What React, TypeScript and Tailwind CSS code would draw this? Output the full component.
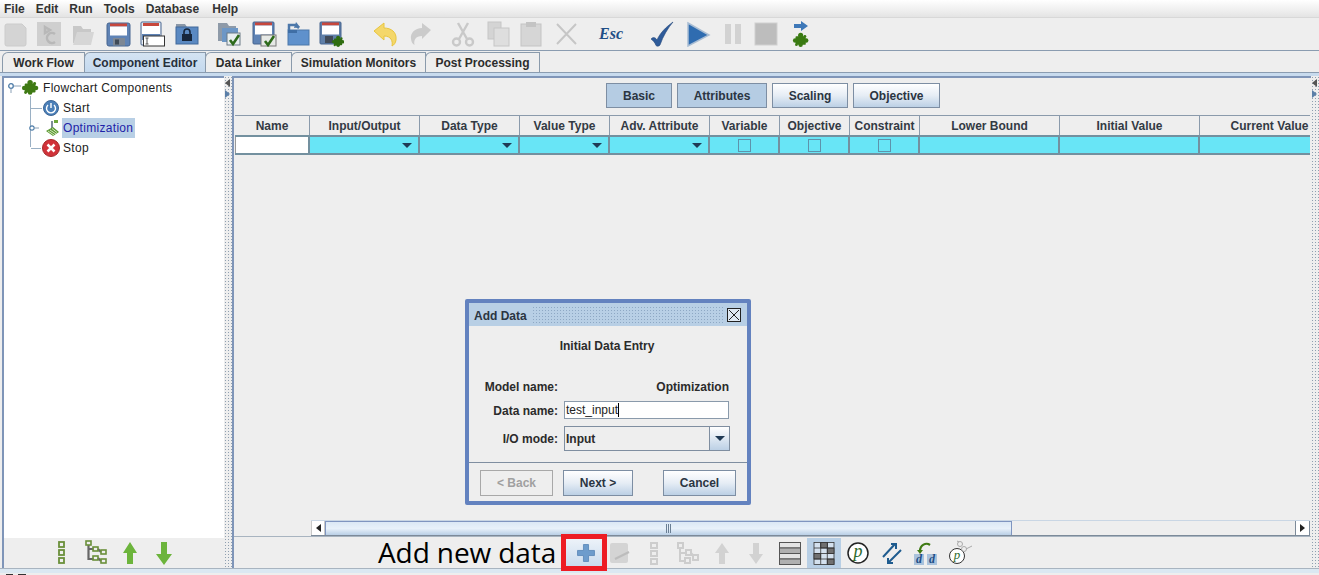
import React from "react";

const F = "font-['Liberation_Sans',Arial,sans-serif]";

function Puzzle({ x = 0, y = 0, s = 1, c = "#3f7a14" }: { x?: number; y?: number; s?: number; c?: string }) {
  return (
    <g transform={`translate(${x} ${y}) scale(${s})`} fill={c}>
      <rect x="3" y="5" width="12" height="10" rx="1" />
      <circle cx="9" cy="4" r="3" />
      <circle cx="2.5" cy="10" r="2.6" />
      <circle cx="15.5" cy="10" r="2.6" />
      <circle cx="9" cy="15" r="2.6" />
      <circle cx="14" cy="5" r="1.6" />
      <circle cx="4" cy="15" r="1.6" />
    </g>
  );
}

function Floppy() {
  return (
    <g>
      <rect x="2" y="2" width="23" height="23" rx="2" fill="#5f83b5" stroke="#46648f" />
      <rect x="5" y="2.5" width="17" height="3" fill="#c7473c" />
      <rect x="5" y="5.5" width="17" height="9" fill="#fdfdfd" />
      <rect x="8" y="17" width="12" height="7.5" fill="#7d8794" />
      <rect x="10" y="18.5" width="4" height="5" fill="#3f4a58" />
    </g>
  );
}

function Check({ x = 0, y = 0 }: { x?: number; y?: number }) {
  return <path transform={`translate(${x} ${y})`} d="M1 6l3 4 6-9" fill="none" stroke="#2d6a1b" strokeWidth="2.6" />;
}

const icons: Record<string, React.ReactNode> = {
  gdoc: <path d="M3 5q0-2 2-2h15l4 4v16q0 2-2 2H5q-2 0-2-2z" fill="#d4d4d4" stroke="#cccccc" />,
  gs: (
    <g>
      <rect x="1" y="1" width="24" height="24" fill="#cfcfcf" />
      <path d="M9 6l5 3-5 3zM19 13a5 5 0 1 0 0 8" fill="none" stroke="#b8b8b8" strokeWidth="2.5" />
    </g>
  ),
  gfolder: (
    <g>
      <path d="M3 5h8l2 3h8v14H3z" fill="#c8c8c8" />
      <path d="M7 11h17l-3 13H3z" fill="#d6d6d6" />
    </g>
  ),
  save: <Floppy />,
  saveas: (
    <g>
      <rect x="2" y="1" width="20" height="23" rx="1" fill="#e9eef5" stroke="#46648f" />
      <rect x="4" y="2" width="16" height="3" fill="#c7473c" />
      <rect x="3" y="5" width="18" height="8" fill="#fff" />
      <rect x="3" y="13" width="18" height="6" fill="#5f83b5" />
      <rect x="4.5" y="15" width="21" height="10" fill="#fff" stroke="#333" />
      <path d="M8 17v6M6.5 17h3M6.5 23h3" stroke="#555" fill="none" />
    </g>
  ),
  lock: (
    <g>
      <path d="M3 3h9l2 3H3z" fill="#8b98a8" />
      <rect x="3" y="6" width="22" height="17" fill="#5a89c2" stroke="#40689a" />
      <rect x="9" y="13" width="10" height="7" fill="#16263c" />
      <path d="M11 13v-2a3 3 0 0 1 6 0v2" fill="none" stroke="#16263c" strokeWidth="1.6" />
    </g>
  ),
  folderCheck: (
    <g>
      <path d="M2 2h9l2 3h7v15H2z" fill="#8e9aa8" />
      <rect x="6" y="7" width="16" height="14" fill="#6d97c6" />
      <rect x="11" y="12" width="13" height="12" fill="#e8eef0" stroke="#6b7a86" />
      <Check x={13} y={13} />
    </g>
  ),
  saveCheck: (
    <g>
      <rect x="2" y="1" width="21" height="22" rx="1" fill="#5f83b5" stroke="#46648f" />
      <rect x="4" y="1.5" width="17" height="3" fill="#c7473c" />
      <rect x="4" y="4.5" width="17" height="9" fill="#fff" />
      <rect x="10" y="14" width="15" height="11" fill="#e6e9e6" stroke="#777" />
      <Check x={13} y={14} />
    </g>
  ),
  openFolder: (
    <g>
      <path d="M4 9V4h6l4 3" fill="none" stroke="#4d78aa" strokeWidth="2.5" />
      <path d="M11 1l4 5-6 1z" fill="#4d78aa" />
      <rect x="3" y="9" width="21" height="15" fill="#5f91cc" stroke="#4d78aa" />
      <rect x="3" y="9" width="9" height="3" fill="#3f6ea5" />
    </g>
  ),
  savePuzzle: (
    <g>
      <rect x="2" y="1" width="21" height="22" rx="1" fill="#5f7fa8" stroke="#46648f" />
      <rect x="4" y="1.5" width="17" height="3" fill="#c7473c" />
      <rect x="4" y="4.5" width="17" height="9" fill="#fff" />
      <rect x="7" y="15" width="8" height="7" fill="#404a58" />
      <Puzzle x={14} y={14} s={0.68} c="#2f6d10" />
    </g>
  ),
  undo: (
    <path d="M1 10l10-8v5c7 0 13 4 12 12-.4 3-2 5-4 6 1-5-1-10-8-10v4z" fill="#f4d76a" stroke="#e8c53e" />
  ),
  redo: <path d="M24 9l-9-7v5C8 7 3 12 4 18c.4 3 1.5 5 3.5 6-1-5 1-9 7.500-9v3z" fill="#cbcbcb" />,
  cut: (
    <g fill="none" stroke="#c9c9c9" strokeWidth="2.4">
      <path d="M8 2l9 16M18 2L9 18" />
      <circle cx="6.500" cy="21" r="3.500" />
      <circle cx="19.500" cy="21" r="3.500" />
    </g>
  ),
  copy: (
    <g fill="#d4d4d4" stroke="#c6c6c6">
      <rect x="3" y="1" width="13" height="17" />
      <rect x="9" y="7" width="15" height="18" fill="#dedede" />
    </g>
  ),
  paste: (
    <g>
      <rect x="3" y="3" width="20" height="22" fill="#d6d6d6" stroke="#c4c4c4" />
      <rect x="8" y="1" width="10" height="5" fill="#c4c4c4" />
    </g>
  ),
  x: <path d="M4 3l19 20M23 3L4 23" stroke="#c6c6c6" strokeWidth="2" fill="none" />,
  check: (
    <path d="M1 18c2-2 4-2 6 1 3-7 9-13 16-18 -5 6-10 14-13 23-1 1.500-3 1.500-4 .5-1-3-3-5-5-6.500z" fill="#2e5b9a" stroke="#26497c" strokeWidth=".6" />
  ),
  play: <path d="M3 2l21 12L3 25z" fill="#2f6cb0" stroke="#a9bdd3" strokeWidth="1.500" />,
  pause: (
    <g fill="#d2d2d2">
      <rect x="5" y="3" width="6" height="20" />
      <rect x="15" y="3" width="6" height="20" />
    </g>
  ),
  stop: <rect x="2" y="2" width="22" height="22" fill="#bdbdbd" stroke="#d0d0d0" strokeWidth="1" />,
  arrowPuzzle: (
    <g>
      <path d="M6 3h7V0l7 5-7 5V7H6z" fill="#3e78b8" />
      <Puzzle x={5} y={11} s={0.85} c="#3a7a12" />
    </g>
  ),
  plus: <path d="M10 3h6v7h7v6h-7v7h-6v-7H3v-6h7z" fill="#6d9ccc" stroke="#5a87b8" />,
  edit: (
    <g>
      <rect x="3" y="3" width="18" height="20" rx="2" fill="#d4d4d4" />
      <path d="M8 19l14-7" stroke="#bcbcbc" strokeWidth="2" />
    </g>
  ),
  chain: (
    <g fill="none" stroke="#cdcdcd" strokeWidth="2">
      <rect x="10" y="3" width="6" height="5" />
      <rect x="10" y="11" width="6" height="5" />
      <rect x="10" y="19" width="6" height="5" />
    </g>
  ),
  tree: (
    <g fill="none" stroke="#cdcdcd" strokeWidth="2">
      <rect x="3" y="3" width="5" height="5" />
      <path d="M5 8v13h5M5 13h6" />
      <rect x="11" y="10" width="5" height="5" />
      <rect x="10" y="18" width="5" height="5" />
      <rect x="18" y="15" width="5" height="5" />
      <path d="M16 13l2 2" />
    </g>
  ),
  up: <path d="M13 3l7 10h-4v11h-6V13H6z" fill="#d2d2d2" />,
  down: <path d="M10 3h6v11h4l-7 10L6 14h4z" fill="#d2d2d2" />,
  rows: (
    <g stroke="#555">
      <rect x="2.500" y="2.500" width="21" height="5.500" fill="#e4e4e4" />
      <rect x="2.500" y="8" width="21" height="5.500" fill="#b0b0b0" />
      <rect x="2.500" y="13.500" width="21" height="5.500" fill="#e4e4e4" />
      <rect x="2.500" y="19" width="21" height="5.500" fill="#b0b0b0" />
    </g>
  ),
  grid: (
    <g stroke="#333" strokeWidth=".8" fill="#d4e1ee">
      <rect x="3" y="2.500" width="20" height="22" />
      <rect x="9.700" y="2.500" width="6.700" height="5.500" fill="#707070" />
      <rect x="16.300" y="8" width="6.700" height="5.500" fill="#707070" />
      <rect x="3" y="13.500" width="6.700" height="5.500" fill="#707070" />
      <rect x="16.300" y="19" width="6.700" height="5.500" fill="#707070" />
      <path d="M9.700 2.500v22M16.300 2.500v22M3 8h20M3 13.500h20M3 19h20" fill="none" />
    </g>
  ),
  p: (
    <g>
      <circle cx="13" cy="13" r="10" fill="#fff" stroke="#222" strokeWidth="1.500" />
      <text x="13" y="17" textAnchor="middle" fontFamily="'Liberation Serif',serif" fontStyle="italic" fontSize="18" fill="#2e6b2e">p</text>
    </g>
  ),
  swap: (
    <g fill="none" stroke="#1f5c8f" strokeWidth="2">
      <path d="M4 17L16 4M12 4h5v5M9 23l13-13M9 18v5h5" />
    </g>
  ),
  dd: (
    <g>
      <path d="M7 11c0-6 6-9 10-6" fill="none" stroke="#3f7a14" strokeWidth="2.200" />
      <path d="M4 10l3 4 3-4z" fill="#3f7a14" />
      <rect x="1" y="14" width="10" height="11" fill="#a9c2dc" />
      <rect x="14" y="14" width="10" height="11" fill="#a9c2dc" />
      <text x="6" y="23" textAnchor="middle" fontFamily="'Liberation Serif',serif" fontStyle="italic" fontWeight="700" fontSize="12" fill="#1f4e86">d</text>
      <text x="19" y="23" textAnchor="middle" fontFamily="'Liberation Serif',serif" fontStyle="italic" fontWeight="700" fontSize="12" fill="#1f4e86">d</text>
    </g>
  ),
  pg: (
    <g>
      <circle cx="10" cy="16" r="7.500" fill="#fff" stroke="#333" />
      <text x="10" y="19" textAnchor="middle" fontFamily="'Liberation Serif',serif" fontStyle="italic" fontSize="13" fill="#2e6b2e">p</text>
      <circle cx="13" cy="4" r="2.500" fill="none" stroke="#aaa" />
      <circle cx="17" cy="9" r="2.500" fill="none" stroke="#aaa" />
      <path d="M19 9l6-3M12 2l-2-1" stroke="#aaa" fill="none" />
    </g>
  ),
};

function Ic({ n, size = 26, className = "" }: { n: string; size?: number; className?: string }) {
  return (
    <svg width={size} height={size} viewBox="0 0 26 26" className={`shrink-0 ${className}`}>
      {icons[n]}
    </svg>
  );
}

function Tab({ label, active, w }: { label: string; active?: boolean; w: string }) {
  return (
    <div
      className={`${w} h-[20px] -mr-px flex items-center justify-center rounded-tl-[6px] border border-b-0 border-[#8a9aab] text-[12px] font-bold ${
        active ? "bg-gradient-to-b from-[#d4e3f2] to-[#c4d9ee] text-[#26303c]" : "bg-[#eeeeee] text-[#2c2c2c]"
      }`}
    >
      {label}
    </div>
  );
}

function Metal({ label, on, w, off }: { label: string; on?: boolean; w: string; off?: boolean }) {
  return (
    <div
      className={`${w} flex items-center justify-center border text-[12px] font-bold ${
        off
          ? "border-[#a8a8a8] text-[#a0a0a0] bg-[#eeeeee]"
          : on
            ? "border-[#7d8ea3] bg-[#b5cce3] text-[#2b3542]"
            : "border-[#7d8ea3] text-[#2b3542] bg-gradient-to-b from-[#ffffff] via-[#e6edf5] to-[#bcd0e5]"
      }`}
    >
      {label}
    </div>
  );
}

const cols: [string, string][] = [
  ["Name", "w-[75px]"],
  ["Input/Output", "w-[110px]"],
  ["Data Type", "w-[100px]"],
  ["Value Type", "w-[90px]"],
  ["Adv. Attribute", "w-[100px]"],
  ["Variable", "w-[70px]"],
  ["Objective", "w-[70px]"],
  ["Constraint", "w-[70px]"],
  ["Lower Bound", "w-[140px]"],
  ["Initial Value", "w-[140px]"],
  ["Current Value", "w-[140px]"],
];

const Caret = () => <div className="w-0 h-0 border-x-[5px] border-x-transparent border-t-[5px] border-t-[#1f3a55]" />;

const dots = "bg-[radial-gradient(#8f9fb0_0.7px,transparent_0.8px)] bg-[length:3px_3px]";

function Splitter({ w }: { w: string }) {
  return (
    <div className={`${w} shrink-0 self-stretch relative ${dots}`}>
      <div className="absolute left-[1px] top-[3px] w-0 h-0 border-y-[4px] border-y-transparent border-r-[5px] border-r-[#555]" />
      <div className="absolute left-[1px] top-[14px] w-0 h-0 border-y-[4px] border-y-transparent border-l-[5px] border-l-[#5b7fa8]" />
    </div>
  );
}

const topGroups: { n: string; cls?: string }[] = [
  { n: "gdoc" }, { n: "gs" }, { n: "gfolder" }, { n: "save", cls: "ml-px" }, { n: "saveas" }, { n: "lock" },
  { n: "folderCheck", cls: "ml-[9px]" }, { n: "saveCheck", cls: "ml-px" }, { n: "openFolder" }, { n: "savePuzzle", cls: "-ml-px" },
  { n: "undo", cls: "ml-[21px]" }, { n: "redo" }, { n: "cut", cls: "ml-[9px]" }, { n: "copy", cls: "ml-px" }, { n: "paste", cls: "-ml-px" }, { n: "x", cls: "ml-px" },
];

export default function App() {
  return (
    <div className={`${F} relative w-[1319px] h-[575px] overflow-hidden bg-[#eeeeee] flex flex-col text-[12px] text-[#222]`}>
      {/* menu */}
      <div className="h-[18px] shrink-0 flex items-center gap-[11px] pl-[4px] border-b border-[#d8d8d8] bg-gradient-to-b from-[#ffffff] to-[#e4e4e4] font-bold text-[12px] text-[#333]">
        <span>File</span><span>Edit</span><span>Run</span><span>Tools</span><span>Database</span><span className="ml-[2px]">Help</span>
      </div>
      {/* toolbar */}
      <div className="h-[33px] shrink-0 flex items-center gap-2 pl-[2px] border-b border-[#8a9cb0]">
        {topGroups.map((g, i) => (
          <Ic key={i} n={g.n} className={g.cls} />
        ))}
        <span className="ml-[6px] w-[36px] text-center font-['Liberation_Serif',serif] italic font-bold text-[16px] text-[#1f4e86]">Esc</span>
        <Ic n="check" className="ml-[13px]" />
        <Ic n="play" className="ml-px" />
        <Ic n="pause" className="ml-px" />
        <Ic n="stop" className="-ml-px" />
        <Ic n="arrowPuzzle" className="ml-px" />
      </div>
      {/* tabs */}
      <div className="h-[22px] shrink-0 flex items-end pl-[2px] border-b border-[#8a9cb0]">
        <Tab label="Work Flow" w="w-[83px]" />
        <Tab label="Component Editor" active w="w-[122px]" />
        <Tab label="Data Linker" w="w-[87px]" />
        <Tab label="Simulation Monitors" w="w-[135px]" />
        <Tab label="Post Processing" w="w-[115px]" />
      </div>
      <div className="h-[3px] shrink-0 bg-[#c8dbee]" />
      {/* content */}
      <div className="flex-1 min-h-0 flex pl-[2px]">
        {/* left pane */}
        <div className="w-[222px] shrink-0 flex flex-col border-l-2 border-t-2 border-[#7f95b8] bg-white">
          <div className="flex-1 pl-[1px] relative">
            <div className="absolute left-[26px] top-[18px] h-[51px] w-px bg-[#9ab0c4]" />
            <div className="flex flex-col text-[12px] tracking-[0.3px] text-[#222]">
              <div className="h-[20px] flex items-center">
                <svg width="16" height="16" viewBox="0 0 16 16" className="shrink-0">
                  <circle cx="6" cy="6" r="2.300" fill="none" stroke="#4d7ca8" strokeWidth="1.300" />
                  <path d="M6 8.500V13M9 6h7" stroke="#8aa0b5" />
                </svg>
                <svg width="20" height="20" viewBox="0 0 20 20" className="shrink-0"><Puzzle x={1} y={1} s={0.9} c="#3f7a14" /></svg>
                <span className="ml-[2px]">Flowchart Components</span>
              </div>
              <div className="h-[20px] flex items-center pl-[26px]">
                <div className="w-[11px] h-px bg-[#9ab0c4]" />
                <svg width="18" height="18" viewBox="0 0 18 18" className="shrink-0">
                  <circle cx="9" cy="9" r="7.500" fill="#4a7fb8" stroke="#3c6696" />
                  <path d="M9 4v5M6 6a4.500 4.500 0 1 0 6 0" fill="none" stroke="#fff" strokeWidth="1.400" />
                </svg>
                <span className="ml-[3px]">Start</span>
              </div>
              <div className="h-[20px] flex items-center pl-[24px]">
                <svg width="10" height="8" viewBox="0 0 10 8" className="shrink-0 relative">
                  <circle cx="3" cy="4" r="2.200" fill="#fff" stroke="#4d7ca8" strokeWidth="1.200" />
                  <path d="M5.500 4h4.500" stroke="#8aa0b5" />
                </svg>
                <svg width="16" height="18" viewBox="0 0 16 18" className="shrink-0 ml-[5px]">
                  <path d="M8 2v8" stroke="#567" strokeWidth="1.500" />
                  <rect x="10" y="1" width="4" height="3" fill="#6fa83a" />
                  <path d="M2 12l7-4 6 5-6 4z" fill="#5c9a34" />
                  <path d="M4 12l6 4M6 11l6 4M8 9.500l5 4" stroke="#d8e8c0" />
                </svg>
                <span className="ml-[2px] pl-[1px] pr-[2px] h-[20px] leading-[20px] bg-[#b8cfe5] text-[#1e22a8]">Optimization</span>
              </div>
              <div className="h-[20px] flex items-center pl-[26px]">
                <div className="w-[10px] h-px bg-[#9ab0c4]" />
                <svg width="20" height="20" viewBox="0 0 20 20" className="shrink-0">
                  <circle cx="10" cy="10" r="8.500" fill="#d1333a" stroke="#a52a2a" />
                  <path d="M6.500 6.500l7 7M13.500 6.500l-7 7" stroke="#fff" strokeWidth="2.500" />
                </svg>
                <span className="ml-[2px]">Stop</span>
              </div>
            </div>
          </div>
          <div className="h-[30px] shrink-0 bg-[#eeeeee] flex items-center pl-[44px] gap-[8px]">
            <svg width="26" height="26" viewBox="0 0 26 26">
              <g fill="none" stroke="#6a8f3a" strokeWidth="1.800"><rect x="11" y="2" width="5" height="5" /><rect x="11" y="10" width="5" height="5" /><rect x="11" y="18" width="5" height="5" /></g>
            </svg>
            <svg width="26" height="26" viewBox="0 0 26 26" className="ml-[2px]">
              <path d="M4.500 5v14h5M4.500 9h5M14 9l3 3M14 18l3 3" stroke="#666" strokeWidth="2.200" fill="none" />
              <g fill="none" stroke="#6a8f3a" strokeWidth="1.600"><rect x="2" y="1" width="5" height="4" /><rect x="9" y="7" width="5" height="4" /><rect x="17" y="10" width="5" height="4" /><rect x="9" y="16" width="5" height="4" /><rect x="17" y="19" width="5" height="4" /></g>
            </svg>
            <svg width="26" height="26" viewBox="0 0 26 26" className="-ml-px"><path d="M13 2l7 11h-4v11h-6V13H6z" fill="#6cb43c" /></svg>
            <svg width="26" height="26" viewBox="0 0 26 26"><path d="M10 2h6v12h5l-8 11-8-11h5z" fill="#6cb43c" /></svg>
          </div>
        </div>
        <Splitter w="w-[8px]" />
        {/* right pane */}
        <div className="w-[1079px] shrink-0 flex flex-col border-l-2 border-t-2 border-[#7f95b8]">
          <div className="flex-1 min-h-0 flex flex-col">
            <div className="h-[37px] shrink-0 pt-[5px] pb-[7px] pl-[372px] flex gap-[5px]">
              <Metal label="Basic" on w="w-[66px]" />
              <Metal label="Attributes" on w="w-[90px]" />
              <Metal label="Scaling" w="w-[76px]" />
              <Metal label="Objective" w="w-[87px]" />
            </div>
            <div className="pl-[1px] w-[1076px] overflow-hidden">
              <div className="flex h-[20px] w-[1200px] border-t border-[#8a9aab]">
                {cols.map(([c, w]) => (
                  <div key={c} className={`${w} shrink-0 flex items-center justify-center border-r border-[#8a9aab] font-bold text-[12px] text-[#333a44]`}>{c}</div>
                ))}
              </div>
              <div className="flex h-[20px] w-[1200px] border-y-2 border-[#73909f] bg-[#68e5f6]">
                {cols.map(([c, w], i) => (
                  <div key={c} className={`${w} shrink-0 border-r-2 border-[#73909f] flex items-center ${i === 0 ? "bg-white border-l border-l-[#999]" : ""} ${i >= 1 && i <= 4 ? "justify-end pr-[6px]" : "justify-center"}`}>
                    {i >= 1 && i <= 4 && <Caret />}
                    {i >= 5 && i <= 7 && <div className="w-[13px] h-[13px] border border-[#5d93ac]" />}
                  </div>
                ))}
              </div>
            </div>
            <div className="flex-1" />
            {/* scrollbar */}
            <div className="h-[16px] shrink-0 ml-[77px] w-[999px] flex border-y border-t-[#c9d6e4] border-b-[#7c8a99] border-[#8a9aab]">
              <div className="w-[14px] shrink-0 flex items-center justify-center bg-white border-x border-[#c8c8c8]">
                <div className="w-0 h-0 border-y-[4px] border-y-transparent border-r-[5px] border-r-[#222]" />
              </div>
              <div className="w-[687px] shrink-0 border-x border-t border-[#7f95c0] bg-gradient-to-b from-[#dbe8f5] via-[#e8f1fa] to-[#b9cfe6] flex items-center justify-center">
                <div className="w-[5px] h-[9px] border-x border-[#6a7f94] relative"><div className="mx-auto w-px h-full bg-[#6a7f94]" /></div>
              </div>
              <div className="flex-1 bg-[#eeeeee]" />
              <div className="w-[15px] shrink-0 flex items-center justify-center bg-white border-x border-[#7c8a99]">
                <div className="w-0 h-0 border-y-[4px] border-y-transparent border-l-[5px] border-l-[#222]" />
              </div>
            </div>
          </div>
          {/* bottom toolbar */}
          <div className="h-[32px] shrink-0 border-t border-[#a8b4c0] flex items-center pl-[144px] relative">
            <span className="w-[185px] shrink-0 whitespace-nowrap font-['Open_Sans',sans-serif] text-[28px] leading-[30px] tracking-[-0.1px] text-black -mt-[1px]">Add new data</span>
            <div className="relative shrink-0 w-[42px] h-[29px] mr-[-4px] pl-[3px] bg-gradient-to-b from-[#eef3f9] to-[#c8dbee] flex items-center justify-center">
              <Ic n="plus" size={22} />
              <div className="absolute -left-[2px] -right-[2px] -top-[4px] -bottom-[4px] border-[5px] border-[#ed1c24]" />
            </div>
            <div className="flex items-center gap-[8px] pl-[6px]">
              <Ic n="edit" />
              <Ic n="chain" />
              <Ic n="tree" />
              <Ic n="up" />
              <Ic n="down" />
              <Ic n="rows" />
              <div className="relative w-[26px] h-[26px] flex items-center justify-center">
                <div className="absolute -inset-x-[4px] -inset-y-[2px] bg-[#b8cfe5]" />
                <Ic n="grid" className="relative" />
              </div>
              <Ic n="p" />
              <Ic n="swap" />
              <Ic n="dd" />
              <Ic n="pg" />
            </div>
          </div>
        </div>
        <Splitter w="w-[8px]" />
      </div>
      <div className="h-[5px] shrink-0 bg-[#dbe8f2] border-t border-[#a8b4c0]" />
      <div className="h-[2px] shrink-0 bg-[#eeeeee] flex items-end gap-[5px] pl-[6px]">
        <div className="w-[7px] h-px bg-[#333]" />
        <div className="w-[8px] h-px bg-[#333]" />
      </div>

      {/* dialog */}
      <div className="absolute left-[465px] top-[299px] w-[286px] h-[206px] border-[4px] border-[#6382bf] rounded-[2px] bg-[#eeeeee] flex flex-col">
        <div className="h-[23px] shrink-0 bg-[#b8cfe5] flex items-center pl-[5px] pr-[6px] pt-[2px] font-bold text-[#2b3542]">
          <span>Add Data</span>
          <div className="flex-1 h-[17px] -mt-[2px] ml-[5px] mr-[4px] bg-[radial-gradient(#8ea8c4_0.7px,transparent_0.8px)] bg-[length:3px_3px]" />
          <div className="w-[14px] h-[14px] -mt-[2px] border border-[#222] bg-[#dfe9f3] relative">
            <svg width="12" height="12" viewBox="0 0 12 12" className="absolute left-0 top-0"><path d="M1 1l10 10M11 1L1 11" stroke="#222" /></svg>
          </div>
        </div>
        <div className="flex-1 flex flex-col">
          <div className="pt-[11px] text-center font-bold text-[#2b2b2b] h-[51px] -translate-x-[1px]">Initial Data Entry</div>
          <div className="grid grid-cols-[85px_165px] gap-x-[6px] font-bold text-[#2b2b2b] pl-[4px]">
            <div className="h-[20px] flex items-center justify-end">Model name:</div>
            <div className="h-[20px] flex items-center justify-end">Optimization</div>
            <div className="h-[21px] mt-[3px] flex items-center justify-end">Data name:</div>
            <div className="h-[18px] mt-[4px] bg-white border border-[#8a9aab] flex items-center pl-[1px] font-normal text-[12px] text-[#222]">
              <span>test_input</span><span className="w-px h-[14px] bg-black" />
            </div>
            <div className="h-[25px] mt-[5px] flex items-center justify-end">I/O mode:</div>
            <div className="h-[25px] mt-[5px] w-[166px] border border-[#7f8ea0] flex">
              <div className="flex-1 flex items-center pl-[1px]">Input</div>
              <div className="w-[20px] border-l border-[#7f8ea0] bg-gradient-to-b from-white to-[#bcd0e5] flex items-center justify-center"><Caret /></div>
            </div>
          </div>
          <div className="mt-[11px] h-px bg-[#7f8ea0]" />
          <div className="flex pl-[11px] mt-[7px] h-[26px]">
            <Metal label="< Back" off w="w-[73px]" />
            <Metal label="Next >" w="w-[70px] ml-[10px]" />
            <Metal label="Cancel" w="w-[73px] ml-[30px]" />
          </div>
        </div>
      </div>
    </div>
  );
}
